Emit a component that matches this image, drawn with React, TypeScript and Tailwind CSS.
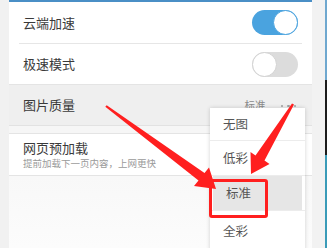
import React from 'react';

const font = { fontFamily: '"Noto Sans CJK SC", "Noto Sans", sans-serif' };

function Toggle({ on }: { on: boolean }) {
  return (
    <div
      className={`relative w-[46px] h-[25px] rounded-full ${
        on ? 'bg-[#4aa3df]' : 'bg-[#dcdcdc]'
      }`}
    >
      <div
        className={`absolute top-0 w-[25px] h-[25px] rounded-full bg-white border ${
          on ? 'right-0 border-[#4aa3df]' : 'left-0 border-[#d2d2d2]'
        }`}
      />
    </div>
  );
}

const items = [
  { label: '无图', h: 'h-[33px]' },
  { label: '低彩', h: 'h-[35px]' },
  { label: '标准', h: 'h-[35px]', active: true },
  { label: '全彩', h: 'h-[40px]' },
];

export default function App() {
  return (
    <div className="relative w-[327px] h-[248px] overflow-hidden bg-[#f3f3f3] flex" style={font}>
      {/* left strip */}
      <div className="w-[9px] bg-[#f1f1f1]" />

      {/* settings panel */}
      <div className="w-[303px] flex flex-col bg-white">
        <div className="h-[2px] bg-[#4a8fc6]" />

        <div className="h-[41px] flex items-center justify-between pl-[14px] pr-[14px]">
          <span className="text-[13px] text-[#3a3a3a]">云端加速</span>
          <Toggle on />
        </div>
        <div className="mx-[10px] h-px bg-[#e6e6e6]" />

        <div className="h-[40px] flex items-center justify-between pl-[14px] pr-[14px]">
          <span className="text-[13px] text-[#3a3a3a]">极速模式</span>
          <Toggle on={false} />
        </div>

        <div className="h-[41px] flex items-center justify-between pl-[14px] pr-[16px] bg-[#efefef] border-t border-[#e4e4e4]">
          <span className="text-[13px] text-[#3a3a3a]">图片质量</span>
          <div className="flex items-center gap-[15px]">
            <span className="text-[10.5px] text-[#8a8a8a]">标准</span>
            <div className="flex items-center gap-[4px] pt-[2px]">
              <span className="w-[2.5px] h-[2.5px] rounded-full bg-[#a0a0a0]" />
              <span className="w-[2.5px] h-[2.5px] rounded-full bg-[#a0a0a0]" />
              <span className="w-[2.5px] h-[2.5px] rounded-full bg-[#a0a0a0]" />
            </div>
          </div>
        </div>

        <div className="h-[8px] bg-[#f6f6f6] border-t border-[#e2e2e2]" />

        <div className="h-[43px] flex flex-col justify-center pl-[14px] border-t border-b border-[#e4e4e4]">
          <span className="text-[13px] text-[#3a3a3a] leading-[17px]">网页预加载</span>
          <span className="text-[9.5px] text-[#9a9a9a] leading-[14px]">提前加载下一页内容，上网更快</span>
        </div>

        <div className="flex-1 bg-gradient-to-b from-[#f8f8f8] to-[#fcfcfc]" />
      </div>

      {/* right edge */}
      <div className="flex-1 bg-[#f2f2f2] flex justify-end">
        <div className="w-[2px] flex flex-col">
          <div className="h-[80px] bg-[#6fa8cf]" />
          <div className="h-[75px] bg-[#1c1c1c]" />
          <div className="flex-1 bg-[#3a9bb8]" />
        </div>
      </div>

      {/* dropdown menu */}
      <div className="absolute left-[210px] top-[108px] w-[95px] bg-white shadow-[0_0_4px_rgba(0,0,0,0.18)] flex flex-col">
        {items.map((it, i) => (
          <div
            key={it.label}
            className={`${it.h} flex items-center ${i < items.length - 1 ? 'border-b border-[#ececec]' : ''}`}
          >
            <div
              className={`w-full h-full flex items-center pl-[13px] ${
                it.active ? 'bg-[#e6e6e6] mx-[3px] pl-[10px]' : ''
              }`}
            >
              <span className="text-[12.5px] text-[#555]">{it.label}</span>
            </div>
          </div>
        ))}
      </div>

      {/* annotation box */}
      <div className="absolute left-[209px] top-[179px] w-[59px] h-[39px] border-[3px] border-[#ff1f1f] rounded-[3px]" />

      {/* annotation arrows */}
      <svg className="absolute left-0 top-0 pointer-events-none" width="327" height="248" viewBox="0 0 327 248">
        <polygon
          fill="#ff1f1f"
          points="105.3,106.8 106.7,105.2 204.5,173 209,167.5 216,189 194,186 198.5,180.5"
        />
        <polygon
          fill="#ff1f1f"
          points="292,103.5 294,104.5 264.5,160.5 269.5,164 251,174 250.5,152 255.5,155.5"
        />
      </svg>
    </div>
  );
}
